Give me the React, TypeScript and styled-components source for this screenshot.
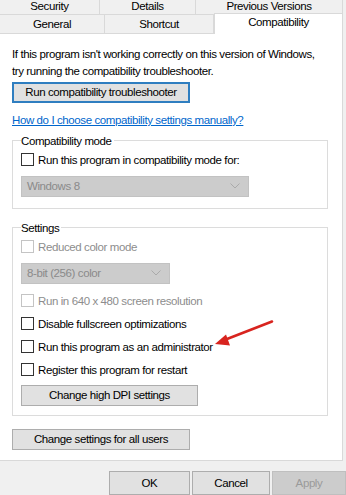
import { FunctionComponent } from "react";
import styled, { createGlobalStyle } from "styled-components";

const GlobalStyle = createGlobalStyle`
    html, body {
        margin: 0;
        padding: 0;
        background: #f0f0f0;
    }
    body {
        font-family: "Liberation Sans", Arial, sans-serif;
        font-size: 11.5px;
        letter-spacing: -0.4px;
        color: #000;
    }
`;

const Dialog = styled.div`
    position: relative;
    width: 346px;
    height: 495px;
    overflow: hidden;
    background: #f0f0f0;
    display: flex;
    flex-direction: column;
`;

const TabRow = styled.div<{ $height: number }>`
    display: flex;
    height: ${p => p.$height}px;
    width: 343px;
    box-sizing: border-box;
    border-bottom: 1px solid #d9d9d9;
`;

const Tab = styled.div<{ $width: number; $selected?: boolean }>`
    box-sizing: border-box;
    width: ${p => p.$width}px;
    display: flex;
    align-items: center;
    justify-content: center;
    border-right: 1px solid #d9d9d9;
    background: ${p => (p.$selected ? "#fff" : "#f0f0f0")};
    white-space: nowrap;
    ${p =>
        p.$selected
            ? `
        border-top: 1px solid #d9d9d9;
        border-left: 1px solid #d9d9d9;
        margin-top: -2px;
        margin-bottom: -1px;
        padding-bottom: 3px;
    `
            : ""}
`;

const TopTab = styled(Tab)`
    padding-bottom: 1px;
`;

const Panel = styled.div`
    box-sizing: border-box;
    width: 343px;
    height: 429px;
    background: #fff;
    border-right: 1px solid #d9d9d9;
    border-bottom: 1px solid #d9d9d9;
    padding: 12px 0 0 12px;
    display: flex;
    flex-direction: column;
    align-items: flex-start;
`;

const Intro = styled.p`
    margin: 0;
    line-height: 17px;
    width: 306px;
`;

const Button = styled.button<{ $width: number; $default?: boolean; $disabled?: boolean }>`
    box-sizing: border-box;
    width: ${p => p.$width}px;
    height: 21px;
    padding: 0;
    font: inherit;
    letter-spacing: inherit;
    color: ${p => (p.$disabled ? "#9a9a9a" : "#000")};
    background: ${p => (p.$disabled ? "#cccccc" : "#e1e1e1")};
    border: ${p => (p.$default ? "2px solid #2f7ec0" : p.$disabled ? "1px solid #bfbfbf" : "1px solid #adadad")};
    border-radius: 0;
`;

const Link = styled.a`
    color: #0066cc;
    text-decoration: underline;
    margin-top: 9px;
    line-height: 16px;
`;

const Group = styled.fieldset<{ $height: number; $top: number }>`
    box-sizing: border-box;
    width: 316px;
    height: ${p => p.$height}px;
    margin: ${p => p.$top}px 0 0 0;
    padding: 0 0 0 8px;
    border: 1px solid #dcdcdc;
    display: flex;
    flex-direction: column;
    align-items: flex-start;
`;

const Legend = styled.legend`
    padding: 0 2px 0 0;
    margin-left: 0;
    line-height: 14px;
`;

const CheckRow = styled.label<{ $disabled?: boolean; $top: number }>`
    display: flex;
    align-items: center;
    gap: 4px;
    margin-top: ${p => p.$top}px;
    height: 14px;
    color: ${p => (p.$disabled ? "#8d8d8d" : "#000")};
`;

const Box = styled.span<{ $disabled?: boolean }>`
    box-sizing: border-box;
    width: 13px;
    height: 13px;
    border: 1px solid ${p => (p.$disabled ? "#c4c4c4" : "#333")};
    background: #fff;
`;

const Select = styled.div<{ $width: number; $top: number }>`
    box-sizing: border-box;
    width: ${p => p.$width}px;
    height: 21px;
    margin-top: ${p => p.$top}px;
    background: #cccccc;
    border: 1px solid #c2c2c2;
    color: #8a8a8a;
    display: flex;
    align-items: center;
    justify-content: space-between;
    padding: 0 8px 0 5px;
`;

const Chevron = () => (
    <svg width="10" height="6" viewBox="0 0 10 6">
        <path d="M0.5 0.5 L5 5 L9.5 0.5" fill="none" stroke="#aaaaaa" strokeWidth="1" />
    </svg>
);

const Footer = styled.div`
    display: flex;
    justify-content: flex-end;
    gap: 2px;
    padding-top: 10px;
`;

const FooterButton = styled(Button)`
    height: 24px;
`;

const Arrow = styled.svg`
    position: absolute;
    left: 0;
    top: 0;
    pointer-events: none;
`;

const Check: FunctionComponent<{ label: string; disabled?: boolean; top: number }> = ({
    label,
    disabled,
    top,
}) => (
    <CheckRow $disabled={disabled} $top={top}>
        <Box $disabled={disabled} />
        {label}
    </CheckRow>
);

const App: FunctionComponent = () => {
    return (
        <>
            <GlobalStyle />
            <Dialog>
                <TabRow $height={15}>
                    <TopTab $width={100}>Security</TopTab>
                    <TopTab $width={96}>Details</TopTab>
                    <TopTab $width={147}>Previous Versions</TopTab>
                </TabRow>
                <TabRow $height={19}>
                    <Tab $width={105}>General</Tab>
                    <Tab $width={109}>Shortcut</Tab>
                    <Tab $width={129} $selected>
                        Compatibility
                    </Tab>
                </TabRow>
                <Panel>
                    <Intro>
                        If this program isn't working correctly on this version of Windows,
                        try running the compatibility troubleshooter.
                    </Intro>
                    <Button $width={178} $default style={{ marginTop: 2 }}>
                        Run compatibility troubleshooter
                    </Button>
                    <Link href="#">How do I choose compatibility settings manually?</Link>
                    <Group $height={75} $top={6}>
                        <Legend>Compatibility mode</Legend>
                        <Check label="Run this program in compatibility mode for:" top={5} />
                        <Select $width={228} $top={9}>
                            Windows 8
                            <Chevron />
                        </Select>
                    </Group>
                    <Group $height={195} $top={12}>
                        <Legend>Settings</Legend>
                        <Check label="Reduced color mode" disabled top={5} />
                        <Select $width={149} $top={9}>
                            8-bit (256) color
                            <Chevron />
                        </Select>
                        <Check label="Run in 640 x 480 screen resolution" disabled top={10} />
                        <Check label="Disable fullscreen optimizations" top={9} />
                        <Check label="Run this program as an administrator" top={9} />
                        <Check label="Register this program for restart" top={9} />
                        <Button $width={177} style={{ marginTop: 8 }}>
                            Change high DPI settings
                        </Button>
                    </Group>
                    <Button $width={178} style={{ marginTop: 13 }}>
                        Change settings for all users
                    </Button>
                </Panel>
                <Footer>
                    <FooterButton $width={81}>OK</FooterButton>
                    <FooterButton $width={78}>Cancel</FooterButton>
                    <FooterButton $width={74} $disabled>
                        Apply
                    </FooterButton>
                </Footer>
                <Arrow width="346" height="495" viewBox="0 0 346 495">
                    <path d="M272 321.5 L227 339" stroke="#d8241f" strokeWidth="2.6" strokeLinecap="round" />
                    <polygon points="215,344 226,334.5 230,345.5" fill="#d8241f" />
                </Arrow>
            </Dialog>
        </>
    );
};

export default App;
